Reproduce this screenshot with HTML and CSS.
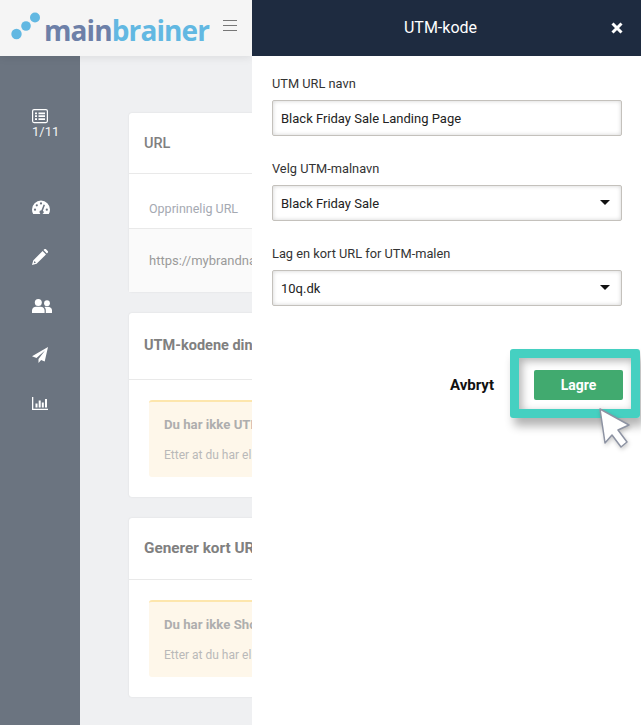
FILE: index.html

```html
<!DOCTYPE html>
<html lang="no">
<head>
    <meta charset="UTF-8">
    <meta name="viewport" content="width=device-width, initial-scale=1.0">
    <title>UTM-kode</title>
    <link rel="stylesheet" href="styles.css">
</head>
<body>
    <div class="page">
        <header class="topbar">
            <div class="logo">
                <svg class="logoDots" width="36" height="32" viewBox="0 0 36 32">
                    <circle cx="5.5" cy="22" r="5.2"/>
                    <circle cx="15" cy="14" r="4.8"/>
                    <circle cx="24" cy="5.5" r="5"/>
                </svg>
                <span class="logoText"><span class="logoMain">main</span><span class="logoBrain">brainer</span></span>
            </div>
            <div class="burger"><span></span><span></span><span></span></div>
        </header>

        <div class="content">
            <nav class="sidebar">
                <div class="progress">
                    <svg width="16" height="15" viewBox="0 0 16 15">
                        <rect x="0.6" y="0.6" width="14.8" height="13" rx="1.5" fill="none" stroke="#fff" stroke-width="1.2"/>
                        <path d="M3 3.4h2v1.8H3zM6.5 3.4H13v1.8H6.5zM3 6.3h2v1.8H3zM6.5 6.3H13v1.8H6.5zM3 9.2h2V11H3zM6.5 9.2H13V11H6.5z" fill="#fff"/>
                    </svg>
                    <span>1/11</span>
                </div>
                <svg class="navIcon" width="18" height="15" viewBox="0 0 18 15">
                    <path d="M9 0.5a9 9 0 0 0-9 9c0 1.7.4 3.2 1.2 4.5h15.6c.8-1.3 1.2-2.8 1.2-4.5a9 9 0 0 0-9-9z" fill="#fff"/>
                    <g fill="#6b7480">
                        <circle cx="3" cy="9.7" r="1.1"/><circle cx="4.8" cy="5.3" r="1.1"/><circle cx="9" cy="3.4" r="1.1"/><circle cx="14.8" cy="9.7" r="1.1"/>
                        <path d="M11.6 4.6l1.4.5-2.1 5.6a2 2 0 1 1-1.5-.5z"/>
                    </g>
                </svg>
                <svg class="navIcon" width="16" height="16" viewBox="0 0 16 16">
                    <path d="M0 16l1.2-4.6L10.6 2l3.4 3.4-9.4 9.4zM1.800 14.200l2.200-.6-1.600-1.600zM11.500 1.100l1-1a1 1 0 0 1 1.300 0l2.100 2.100a1 1 0 0 1 0 1.300l-1 1z" fill="#fff" fill-rule="evenodd"/>
                </svg>
                <svg class="navIcon" width="20" height="14" viewBox="0 0 20 14">
                    <circle cx="6.3" cy="3.5" r="3.5" fill="#fff"/>
                    <circle cx="15" cy="4.2" r="2.9" fill="#fff"/>
                    <path d="M0 14v-2.5C0 9.3 1.8 7.8 4 7.8h4.6c2.2 0 4 1.5 4 3.7V14zM13.8 14v-2.6c0-1.3-.5-2.5-1.4-3.3.7-.3 1.3-.4 2-.4h1.3c2.4 0 4.3 1.5 4.3 3.5V14z" fill="#fff"/>
                </svg>
                <svg class="navIcon" width="16" height="16" viewBox="0 0 16 16">
                    <path d="M16 0L0 9.2l4.5 1.9L13 3.5 6.5 12v4l2.6-3 3.6 1.5z" fill="#fff"/>
                </svg>
                <svg class="navIcon" width="16" height="13" viewBox="0 0 16 13">
                    <path d="M0 0h1.300v11.700H16V13H0zM3.500 6.500h2v4h-2zM6.700 3.500h2v7h-2zM9.800 5.500h2v5h-2zM13 2h2v8.500h-2z" fill="#fff"/>
                </svg>
            </nav>

            <main class="main">
                <section class="card">
                    <h2 class="cardTitle cardTitleUrl">URL</h2>
                    <div class="urlLabel">Opprinnelig URL</div>
                    <div class="urlValue">https://mybrandna</div>
                </section>
                <section class="card">
                    <h2 class="cardTitle">UTM-kodene din</h2>
                    <div class="cardBody">
                        <div class="notice">
                            <strong>Du har ikke UTM</strong>
                            <p>Etter at du har el</p>
                        </div>
                    </div>
                </section>
                <section class="card">
                    <h2 class="cardTitle cardTitleShort">Generer kort URL</h2>
                    <div class="cardBody">
                        <div class="notice">
                            <strong>Du har ikke Short</strong>
                            <p>Etter at du har el</p>
                        </div>
                    </div>
                </section>
            </main>
        </div>

        <aside class="drawer">
            <div class="drawerHead">
                <span>UTM-kode</span>
                <svg class="closeIcon" width="12" height="12" viewBox="0 0 12 12">
                    <path d="M1.500 1.500l9 9M10.500 1.500l-9 9" stroke="#fff" stroke-width="3"/>
                </svg>
            </div>
            <div class="form">
                <label class="fieldLabel">UTM URL navn</label>
                <div class="field">Black Friday Sale Landing Page</div>
                <label class="fieldLabel">Velg UTM-malnavn</label>
                <div class="field fieldSelect">Black Friday Sale</div>
                <label class="fieldLabel">Lag en kort URL for UTM-malen</label>
                <div class="field fieldSelect">10q.dk</div>
                <div class="actions">
                    <span class="cancel">Avbryt</span>
                    <div class="saveWrap">
                        <button class="save">Lagre</button>
                        <div class="highlight"></div>
                        <svg class="cursor" width="34" height="44" viewBox="0 0 34 44">
                            <path d="M2 2l29 16-11 5 9 12-6 5-9-12-7 8z" fill="#fff" stroke="#8d93a3" stroke-width="1.5" stroke-linejoin="round"/>
                        </svg>
                    </div>
                </div>
            </div>
        </aside>
    </div>
</body>
</html>
```

FILE: styles.css

```css
* {
    box-sizing: border-box;
}
body {
    margin: 0;
    font-family: Roboto, Arial, sans-serif;
    background-color: white;
}
.page {
    position: relative;
    width: 641px;
    height: 725px;
    overflow: hidden;
}
.topbar {
    position: relative;
    display: flex;
    align-items: center;
    width: 252px;
    height: 56px;
    padding: 0 15px 0 11px;
    background-color: #f5f5f5;
    box-shadow: 0 2px 8px rgba(0, 0, 0, 0.08);
}
.logo {
    display: flex;
    align-items: center;
}
.logoDots {
    fill: #62b8e2;
    margin-top: -1px;
}
.logoText {
    margin-left: -3px;
    margin-top: 3px;
    font-family: "Open Sans", sans-serif;
    font-size: 28px;
    font-weight: 700;
    letter-spacing: -0.9px;
    line-height: 32px;
}
.logoMain {
    color: #6d80a8;
}
.logoBrain {
    color: #62b8e2;
}
.burger {
    display: flex;
    flex-direction: column;
    gap: 4px;
    width: 14px;
    margin-left: auto;
    margin-top: -6px;
}
.burger span {
    height: 1px;
    background-color: #777;
}
.content {
    display: flex;
    height: 669px;
}
.sidebar {
    display: flex;
    flex-direction: column;
    align-items: flex-start;
    flex: none;
    width: 80px;
    padding: 53px 0 0 32px;
    background-color: #6b7480;
}
.progress {
    display: flex;
    flex-direction: column;
    align-items: flex-start;
    margin-bottom: 61px;
    color: #f2f3f4;
    font-size: 13px;
    line-height: 15px;
}
.navIcon {
    display: block;
    margin-bottom: 34px;
}
.main {
    flex: none;
    width: 172px;
    padding: 57px 0 0 49px;
    background-color: #eff0f2;
}
.card {
    width: 400px;
    margin-bottom: 21px;
    border-radius: 3px;
    background-color: white;
    box-shadow: 0 0 2px rgba(0, 0, 0, 0.1);
}
.cardTitle {
    height: 67px;
    margin: 0;
    padding: 0 15px;
    border-bottom: 1px solid #e9e9e9;
    color: #808080;
    font-size: 14.5px;
    font-weight: 700;
    line-height: 65px;
    white-space: nowrap;
}
.cardTitleUrl {
    height: 61px;
    font-weight: 500;
    line-height: 61px;
}
.cardTitleShort {
    height: 62px;
    font-size: 15.3px;
    line-height: 60px;
}
.urlLabel {
    height: 55px;
    padding: 27px 20px 0;
    border-bottom: 1px solid #e9e9e9;
    color: #a5a9b2;
    font-size: 12.5px;
    line-height: 15px;
}
.urlValue {
    height: 63px;
    padding: 24px 20px 0;
    background-color: #fafafa;
    color: #9a9a9a;
    font-size: 13px;
    line-height: 16px;
    white-space: nowrap;
}
.cardBody {
    padding: 20px;
}
.notice {
    height: 77px;
    padding: 15px 15px 0;
    border-top: 2px solid #fde6ad;
    border-radius: 3px;
    background-color: #fef7ea;
    color: #b9b9b9;
    white-space: nowrap;
}
.notice strong {
    display: block;
    color: #aeaeae;
    font-size: 13.2px;
    line-height: 16px;
}
.notice p {
    margin: 14px 0 0;
    font-size: 12px;
    line-height: 16px;
}
.drawer {
    position: absolute;
    top: 0;
    left: 252px;
    width: 389px;
    height: 725px;
    background-color: white;
}
.drawerHead {
    position: relative;
    height: 56px;
    padding-right: 12px;
    background-color: #1e2b40;
    color: white;
    font-size: 16px;
    line-height: 56px;
    text-align: center;
}
.closeIcon {
    position: absolute;
    top: 22px;
    right: 18px;
}
.form {
    padding: 20px 19px 0 20px;
}
.fieldLabel {
    display: block;
    height: 24px;
    color: #333;
    font-size: 12.8px;
    line-height: 16px;
}
.field {
    position: relative;
    height: 36px;
    margin-bottom: 25px;
    padding: 1px 0 0 8px;
    border: 1px solid #c4c1bc;
    border-radius: 2px;
    box-shadow: inset 0 0 4px rgba(0, 0, 0, 0.18);
    color: #222;
    font-size: 13px;
    line-height: 33px;
}
.fieldSelect::after {
    content: "";
    position: absolute;
    top: 14px;
    right: 11px;
    border-top: 5px solid #111;
    border-left: 5px solid transparent;
    border-right: 5px solid transparent;
}
.actions {
    display: flex;
    justify-content: flex-end;
    align-items: center;
    margin: 64px -1px 0 0;
}
.cancel {
    margin-right: 40px;
    color: #111;
    font-size: 15px;
    font-weight: 700;
}
.saveWrap {
    position: relative;
}
.save {
    display: block;
    width: 89px;
    height: 30px;
    border: none;
    border-radius: 2px;
    background-color: #41aa6f;
    color: white;
    font-family: Roboto, Arial, sans-serif;
    font-size: 14px;
    font-weight: 700;
}
.highlight {
    position: absolute;
    top: -21px;
    left: -24px;
    width: 130px;
    height: 69px;
    border: 9px solid #45d0c1;
    border-radius: 3px;
    box-shadow: 4px 8px 10px rgba(0, 0, 0, 0.3), inset 3px 3px 8px rgba(0, 0, 0, 0.3);
}
.cursor {
    position: absolute;
    top: 37px;
    left: 64px;
    filter: drop-shadow(1px 2px 2px rgba(0, 0, 0, 0.2));
}
```
